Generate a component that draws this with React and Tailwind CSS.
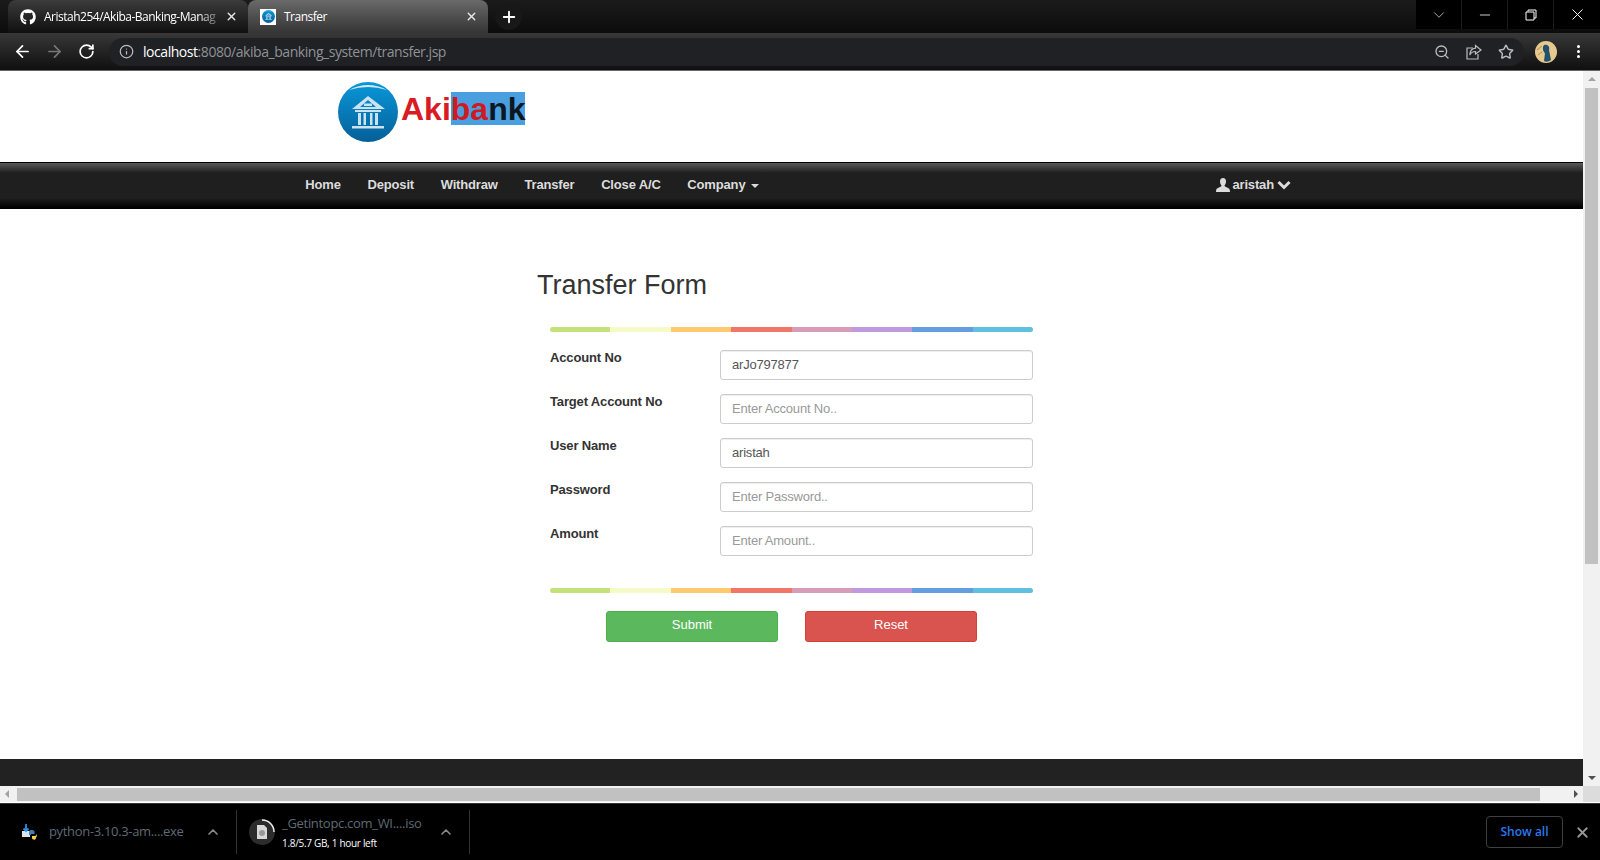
import { ArrowLeft, ArrowRight, RotateCw, Info, ZoomOut, Star, X, Plus, ChevronDown, ChevronUp, Minus } from 'lucide-react'
import { FaGithub } from 'react-icons/fa'

const RAINBOW = ['bg-[#c5e17a]', 'bg-[#f5fac8]', 'bg-[#fdcb6e]', 'bg-[#f2776b]', 'bg-[#d89cbb]', 'bg-[#c19ade]', 'bg-[#659ee0]', 'bg-[#5fc0e0]']

const FIELDS = [
  { label: 'Account No', value: 'arJo797877' },
  { label: 'Target Account No', placeholder: 'Enter Account No..' },
  { label: 'User Name', value: 'aristah' },
  { label: 'Password', placeholder: 'Enter Password..' },
  { label: 'Amount', placeholder: 'Enter Amount..' },
]

const NAV = ['Home', 'Deposit', 'Withdraw', 'Transfer', 'Close A/C']

function BankGlyph({ size = 60 }) {
  return (
    <svg width={size} height={size} viewBox="0 0 60 60" className="shrink-0">
      <defs>
        <linearGradient id="bankBlue" x1="0" y1="0" x2="0" y2="1">
          <stop offset="0" stopColor="#0a97d9" />
          <stop offset="1" stopColor="#055f97" />
        </linearGradient>
      </defs>
      <circle cx="30" cy="30" r="30" fill="url(#bankBlue)" />
      <path d="M11 8 Q30 -2 49 8 Q30 2 11 8Z" fill="#cfeaf8" />
      <path d="M30 14 L47 27 H14Z M30 18 L22 25 H38Z" fill="#c9e3f3" fillRule="evenodd" />
      <path d="M26 21.500 H34 V24 H26Z M17 28 H43 V30 H17Z M20 31 H23 V43 H20Z M25.500 31 H28 V43 H25.500Z M32 31 H34.500 V43 H32Z M37 31 H40 V43 H37Z M14 44 H46 V46.500 H14Z" fill="#c9e3f3" />
    </svg>
  )
}

function RainbowBar() {
  return (
    <div className="flex h-[5px] w-[483px] overflow-hidden rounded-full">
      {RAINBOW.map((c) => (
        <div key={c} className={`flex-1 ${c}`} />
      ))}
    </div>
  )
}

function Tab({ active, icon, title, fade }) {
  return (
    <div
      className={`flex h-[33px] w-[240px] items-center rounded-t-lg pl-[12px] pr-[10px] ${
        active ? 'bg-gradient-to-b from-[#6a6a6a] to-[#353535]' : 'bg-gradient-to-b from-[#3c3c3c] to-[#101010]'
      }`}
    >
      <div className="flex w-[16px] shrink-0 items-center justify-center">{icon}</div>
      <span
        className={`ml-[8px] flex-1 whitespace-nowrap font-['Open_Sans',sans-serif] text-[12px] tracking-[-0.5px] text-white ${
          fade ? '[mask-image:linear-gradient(to_right,black_85%,transparent)]' : ''
        }`}
      >
        {title}
      </span>
      <X size={13} strokeWidth={2.5} className="text-[#e8e8e8]" />
    </div>
  )
}

function WindowButton({ children, last }) {
  return (
    <div className={`flex h-[29px] w-[46px] items-center justify-center ${last ? '' : 'border-r border-[#1c1c1c]'}`}>{children}</div>
  )
}

function BrowserChrome() {
  return (
    <>
      <div className="flex h-[33px] items-start bg-gradient-to-b from-[#1b1b1b] to-[#0c0c0c] pl-[8px]">
        <Tab icon={<FaGithub size={16} className="text-white" />} title="Aristah254/Akiba-Banking-Manag" fade />
        <Tab
          active
          title="Transfer"
          icon={
            <div className="flex h-[16px] w-[16px] items-center justify-center bg-white">
              <BankGlyph size={13} />
            </div>
          }
        />
        <div className="ml-[7px] mt-[3px] flex h-[27px] w-[27px] items-center justify-center rounded-full bg-[#181818]">
          <Plus size={18} strokeWidth={2.5} className="text-white" />
        </div>
        <div className="ml-auto flex bg-black">
          <WindowButton><ChevronDown size={18} strokeWidth={1} className="text-[#ddd]" /></WindowButton>
          <WindowButton><Minus size={16} strokeWidth={1.2} className="text-white" /></WindowButton>
          <WindowButton>
            <svg width="12" height="12" viewBox="0 0 12 12" fill="none" stroke="#fff" strokeWidth="1">
              <path d="M3 2.500V1H11V9H9M1 3H9V11H1Z" />
            </svg>
          </WindowButton>
          <WindowButton last><X size={19} strokeWidth={1.2} className="text-white" /></WindowButton>
        </div>
      </div>
      <div className="flex h-[38px] items-center border-b border-[#666] bg-gradient-to-b from-[#383838] to-[#101010] pl-[13px] pr-[20px]">
        <ArrowLeft size={19} strokeWidth={2.2} className="text-white" />
        <ArrowRight size={19} strokeWidth={2.2} className="ml-[13px] text-[#777]" />
        <RotateCw size={17} strokeWidth={2.4} className="ml-[14px] text-white" />
        <div className="ml-[14px] flex h-[28px] flex-1 items-center rounded-full bg-[#202124] pl-[10px] pr-[10px]">
          <Info size={15} className="text-[#bbb]" />
          <span className="ml-[9px] whitespace-nowrap font-['Open_Sans',sans-serif] text-[14px] tracking-[-0.45px] text-[#8f9296]">
            <span className="text-white">localhost</span>:8080/akiba_banking_system/transfer.jsp
          </span>
          <ZoomOut size={16} className="ml-auto text-[#bbb]" />
          <svg width="16" height="16" viewBox="0 0 16 16" fill="none" stroke="#bbb" strokeWidth="1.200" className="ml-[16px]">
            <path d="M7 4H1V15H12V10" />
            <path d="M9.500 1.500 15 6 9.500 10V7.500C7 7.500 5 8.500 3.800 11 4 7.500 6 4.500 9.500 4.200Z" />
          </svg>
          <Star size={16} strokeWidth={2.2} className="ml-[16px] text-[#bbb]" />
        </div>
        <svg width="22" height="22" viewBox="0 0 22 22" className="ml-[11px] shrink-0">
          <circle cx="11" cy="11" r="11" fill="#e6c98e" />
          <path d="M9 4C13 3 15 6 14 9L16 19Q12 22 9 20L10 12C8 11 7 6 9 4Z" fill="#23506a" />
          <path d="M2 9 7 5M3 14 7 11" stroke="#b98a4a" strokeWidth="1" />
        </svg>
        <div className="ml-[20px] flex flex-col gap-[2px]">
          <div className="h-[3px] w-[3px] rounded-full bg-white" />
          <div className="h-[3px] w-[3px] rounded-full bg-white" />
          <div className="h-[3px] w-[3px] rounded-full bg-white" />
        </div>
      </div>
    </>
  )
}

function Logo() {
  return (
    <div className="flex h-[91px] items-start bg-white pl-[338px] pt-[11px]">
      <BankGlyph />
      <div className="ml-[3px] mt-[10px] flex h-[33px] items-center font-['Liberation_Sans',sans-serif] text-[32px] font-bold leading-none">
        <span className="text-[#d81b24]">Aki</span>
        <div className="flex h-[33px] items-center bg-[#4a9fe0]">
          <span className="text-[#cf1a22]">ba</span>
          <span className="text-[#0d1722]">nk</span>
        </div>
      </div>
    </div>
  )
}

function Navbar() {
  return (
    <div className="flex h-[47px] items-center border-y border-black bg-[linear-gradient(to_bottom,#5a5a5a_0%,#1f1f1f_22%,#1f1f1f_78%,#000_100%)] pb-[2px] pl-[292px] shadow-[0_2px_2px_rgba(0,0,0,0.25)]">
      {NAV.map((n) => (
        <span key={n} className="px-[13.3px] text-[13px] font-bold tracking-[-0.15px] text-[#dcdcdc]">{n}</span>
      ))}
      <span className="flex items-center px-[13.3px] text-[13px] font-bold tracking-[-0.15px] text-[#dcdcdc]">
        Company
        <span className="ml-[6px] mt-[2px] h-0 w-0 border-x-4 border-t-4 border-x-transparent border-t-[#dcdcdc]" />
      </span>
      <span className="ml-auto mr-[292px] flex items-center text-[13px] font-bold tracking-[-0.15px] text-[#dcdcdc]">
        <svg width="14" height="14" viewBox="0 0 14 14" className="mr-[2px]" fill="#dcdcdc">
          <path d="M7 0C5 0 4 1.500 4 3.500 4 5.500 5 7 5.500 7.500 5.500 8.500 4 9 2 10 .5 10.800 0 11.500 0 14H14C14 11.500 13.500 10.800 12 10 10 9 8.500 8.500 8.500 7.500 9 7 10 5.500 10 3.500 10 1.500 9 0 7 0Z" />
        </svg>
        aristah
        <svg width="14" height="10" viewBox="0 0 14 10" className="ml-[3px]" fill="none" stroke="#dcdcdc" strokeWidth="3">
          <path d="M1.500 2 7 7.500 12.500 2" />
        </svg>
      </span>
    </div>
  )
}

function TransferForm() {
  return (
    <div className="flex flex-1 flex-col bg-white pl-[537px] pt-[60px]">
      <h2 className="h-[33px] text-[27px] leading-[33px] text-[#333]">Transfer Form</h2>
      <div className="ml-[13px] mt-[25px] w-[483px]">
        <RainbowBar />
        <div className="mt-[18px] flex flex-col gap-[14px]">
          {FIELDS.map((f) => (
            <div key={f.label} className="flex h-[30px]">
              <label className="w-[170px] text-[13px] font-bold leading-[15px] tracking-[-0.15px] text-[#333]">{f.label}</label>
              <input
                readOnly
                value={f.value ?? ''}
                placeholder={f.placeholder}
                className="h-[30px] flex-1 rounded-[3px] border border-[#ccc] px-[11px] pb-[2px] text-[13px] tracking-[-0.2px] text-[#555] shadow-[inset_0_1px_1px_rgba(0,0,0,0.075)] placeholder:text-[#999]"
              />
            </div>
          ))}
        </div>
        <div className="mt-[32px]"><RainbowBar /></div>
        <div className="ml-[56px] mt-[18px] flex gap-[27px]">
          <button className="h-[31px] w-[172px] rounded-[3px] border border-[#4cae4c] bg-[#5cb85c] pb-[4px] text-[13px] text-white">Submit</button>
          <button className="h-[31px] w-[172px] rounded-[3px] border border-[#d43f3a] bg-[#d9534f] pb-[4px] text-[13px] text-white">Reset</button>
        </div>
      </div>
    </div>
  )
}

function VerticalScrollbar() {
  return (
    <div className="flex w-[17px] flex-col items-center bg-[#f1f1f1]">
      <div className="mt-[6px] h-0 w-0 border-x-4 border-b-4 border-x-transparent border-b-[#a3a3a3]" />
      <div className="mt-[7px] h-[476px] w-[13px] bg-[#c1c1c1]" />
      <div className="mb-[6px] mt-auto h-0 w-0 border-x-4 border-t-4 border-x-transparent border-t-[#505050]" />
    </div>
  )
}

function HorizontalScrollbar() {
  return (
    <div className="flex h-[17px] bg-white">
      <div className="flex h-[16px] flex-1 items-center bg-[#f1f1f1] py-[2px] pl-[5px] pr-[5px]">
        <div className="h-0 w-0 border-y-4 border-r-4 border-y-transparent border-r-[#a3a3a3]" />
        <div className="ml-[8px] h-[13px] w-[1523px] bg-[#c1c1c1]" />
        <div className="ml-auto h-0 w-0 border-y-4 border-l-4 border-y-transparent border-l-[#505050]" />
      </div>
      <div className="h-[16px] w-[17px] bg-[#dcdcdc]" />
    </div>
  )
}

function PythonFileIcon() {
  return (
    <svg width="18" height="18" viewBox="0 0 18 18" className="shrink-0">
      <path d="M2 8H10V14H2Z" fill="#d9e3ee" />
      <path d="M6 1V8M3.500 5.500 6 8 8.500 5.500" stroke="#2a8fe8" strokeWidth="1.800" fill="none" />
      <path d="M9 9C9 7.500 10 7 12 7 14 7 14.500 8 14.500 9V11H11V12H9Z" fill="#3f7fb8" />
      <path d="M17 10C17 12 16 13 14.500 13H12V15C12 16.500 14 17 15 16.500 16 16 16 15.500 16 14.500 17 14 17 12 17 10Z" fill="#f5cf45" />
    </svg>
  )
}

function DiscIcon() {
  return (
    <svg width="26" height="26" viewBox="0 0 26 26" className="shrink-0">
      <circle cx="13" cy="13" r="13" fill="#2c2c2c" />
      <path d="M13 1A12 12 0 0 1 25 13" stroke="#eee" strokeWidth="1.500" fill="none" />
      <path d="M8 6H15L18 9V20H8Z" fill="#d8d8d8" />
      <circle cx="13" cy="14" r="3" fill="#999" />
    </svg>
  )
}

function DownloadBar() {
  return (
    <div className="flex h-[57px] items-center border-t border-[#333] bg-black font-['Open_Sans',sans-serif]">
      <div className="ml-[20px] flex w-[216px] items-center">
        <PythonFileIcon />
        <span className="ml-[11px] whitespace-nowrap text-[13px] tracking-[-0.33px] text-[#5f6a72]">python-3.10.3-am....exe</span>
        <ChevronUp size={16} strokeWidth={2.5} className="ml-auto mr-[15px] text-[#888]" />
      </div>
      <div className="h-[44px] w-px bg-[#333]" />
      <div className="ml-[12px] flex w-[220px] items-center">
        <DiscIcon />
        <div className="mb-[2px] ml-[7px] flex flex-col">
          <span className="whitespace-nowrap text-[13px] leading-[18px] tracking-[-0.3px] text-[#5f6a72]">_Getintopc.com_WI....iso</span>
          <span className="mt-[5px] whitespace-nowrap text-[10px] leading-[12px] tracking-[-0.3px] text-white">1.8/5.7 GB, 1 hour left</span>
        </div>
        <ChevronUp size={16} strokeWidth={2.5} className="ml-auto mr-[15px] text-[#888]" />
      </div>
      <div className="h-[44px] w-px bg-[#333]" />
      <div className="ml-auto flex h-[32px] w-[77px] items-center justify-center rounded-[4px] border border-[#3c4043] pb-[1px] text-[12px] font-semibold text-[#2b78ee]">
        Show all
      </div>
      <X size={17} strokeWidth={2.5} className="ml-[11px] mr-[9px] text-[#999]" />
    </div>
  )
}

export default function App() {
  return (
    <div className="flex h-[860px] w-[1600px] flex-col overflow-hidden font-['Liberation_Sans',sans-serif]">
      <BrowserChrome />
      <div className="flex h-[715px]">
        <div className="flex flex-1 flex-col">
          <Logo />
          <Navbar />
          <TransferForm />
          <div className="h-[27px] bg-[#222]" />
        </div>
        <VerticalScrollbar />
      </div>
      <HorizontalScrollbar />
      <DownloadBar />
    </div>
  )
}
